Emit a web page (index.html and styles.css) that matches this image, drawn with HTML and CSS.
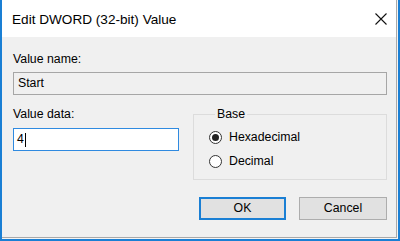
FILE: index.html
```html
<!DOCTYPE html>
<html>
<head>
<meta charset="utf-8">
<link rel="stylesheet" href="styles.css">
</head>
<body>
<div class="window">
  <div class="dialog">
    <div class="titlebar">
      <span class="title">Edit DWORD (32-bit) Value</span>
      <svg class="close" width="12" height="12" viewBox="0 0 12 12"><path d="M0.5 0.5 L11.5 11.5 M11.5 0.5 L0.5 11.5" stroke="#111" stroke-width="1.1" fill="none"/></svg>
    </div>
    <div class="content">
      <div class="label">Value name:</div>
      <div class="field readonly">Start</div>
      <div class="row">
        <div class="col">
          <div class="label">Value data:</div>
          <div class="field active">4<span class="caret"></span></div>
        </div>
        <fieldset class="group">
          <legend>Base</legend>
          <div class="radio"><span class="dot checked"></span><span>Hexadecimal</span></div>
          <div class="radio"><span class="dot"></span><span>Decimal</span></div>
        </fieldset>
      </div>
      <div class="buttons">
        <div class="btn default">OK</div>
        <div class="btn">Cancel</div>
      </div>
    </div>
  </div>
</div>
</body>
</html>
```
FILE: styles.css
```css
html, body {
  margin: 0;
  padding: 0;
  background: #f0f0f0;
}
body {
  font-family: "Liberation Sans", Arial, sans-serif;
  font-size: 12.3px;
  color: #000;
}
.window {
  width: 400px;
  height: 241px;
  box-sizing: border-box;
  border-left: 2px solid #1a7fd4;
  border-right: 2px solid #1a7fd4;
  border-bottom: 2px solid #1a7fd4;
  padding: 0 1px 1px 0;
  background: #f4f4f4;
}
.dialog {
  height: 238px;
  box-sizing: border-box;
  border-right: 1px solid #a9a9a9;
  border-bottom: 1px solid #a9a9a9;
  background: #f0f0f0;
}
.titlebar {
  height: 37px;
  background: #fff;
  display: flex;
  align-items: center;
  justify-content: space-between;
  padding: 0 9px 0 10px;
}
.title {
  font-size: 13.6px;
  line-height: 16px;
  margin-top: 3px;
}
.close {
  display: block;
  margin-top: 1px;
}
.content {
  padding: 15px 9px 0 11px;
}
.label {
  line-height: 15px;
  height: 15px;
}
.field {
  box-sizing: border-box;
  height: 23px;
  line-height: 21px;
  padding-left: 4px;
  border: 1px solid #a6a6a6;
  background: #f0f0f0;
}
.readonly {
  margin-top: 5px;
}
.row {
  display: flex;
  gap: 14px;
  margin-top: 12px;
}
.col {
  width: 166px;
}
.active {
  margin-top: 6px;
  background: #fff;
  border-color: #2f8ae0;
  padding-left: 3px;
  display: flex;
  align-items: center;
}
.caret {
  display: inline-block;
  width: 1px;
  height: 14px;
  background: #000;
  margin-left: 1px;
}
.group {
  flex: 1;
  margin: 0;
  padding: 6px 0 9px 15px;
  border: 1px solid #dcdcdc;
  min-width: 0;
}
.group legend {
  padding: 0 2px;
  margin-left: 6px;
  line-height: 15px;
}
.radio {
  display: flex;
  align-items: center;
  gap: 7px;
  height: 18px;
}
.radio + .radio {
  margin-top: 6px;
}
.dot {
  width: 13px;
  height: 13px;
  box-sizing: border-box;
  border: 1px solid #333;
  border-radius: 50%;
  background: #fff;
  display: flex;
  align-items: center;
  justify-content: center;
}
.dot.checked::after {
  content: "";
  width: 7px;
  height: 7px;
  border-radius: 50%;
  background: #222;
}
.buttons {
  display: flex;
  justify-content: flex-end;
  gap: 13px;
  margin-top: 17px;
}
.btn {
  box-sizing: border-box;
  width: 88px;
  height: 23px;
  border: 1px solid #adadad;
  background: #e1e1e1;
  text-align: center;
  line-height: 21px;
}
.btn.default {
  width: 87px;
  border: 2px solid #1a7fd4;
  line-height: 19px;
}
```
